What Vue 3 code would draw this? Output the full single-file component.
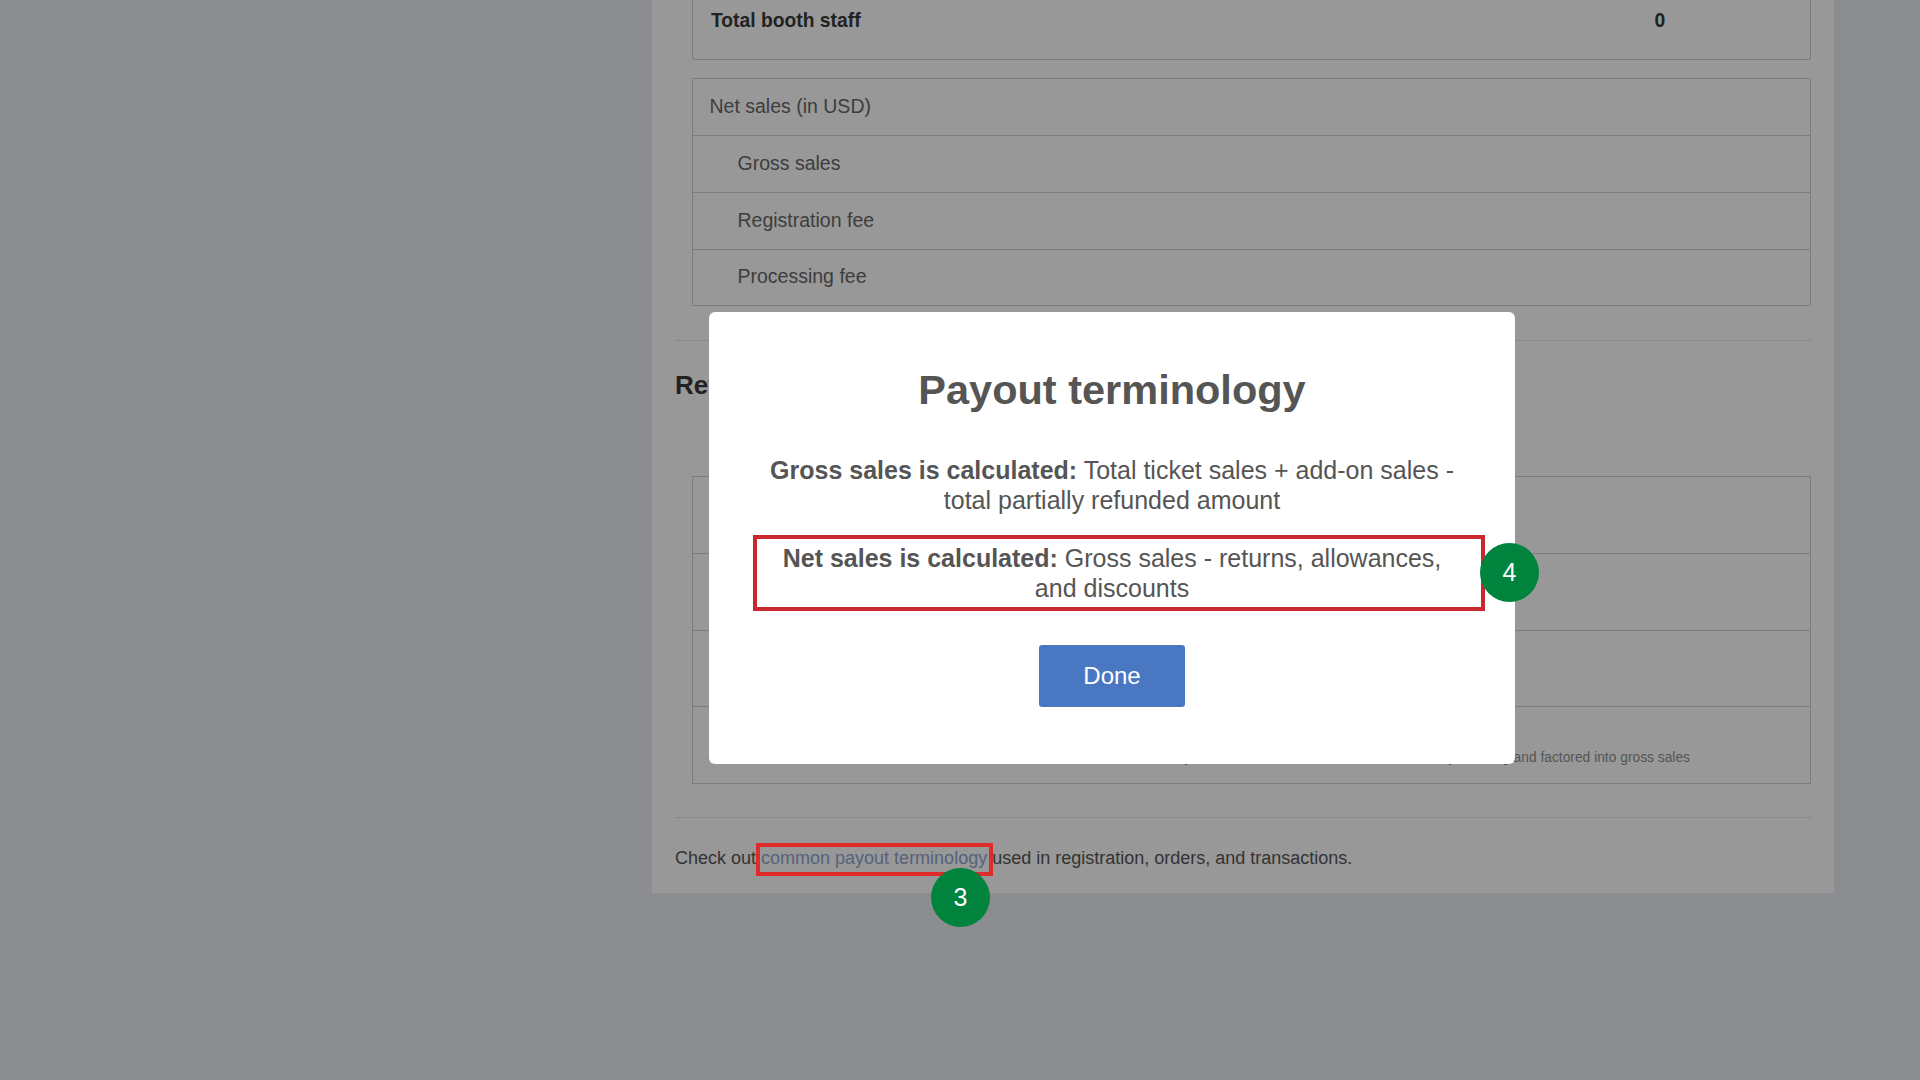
<script setup>
const topRows = [
  { label: 'Net sales (in USD)', sub: false },
  { label: 'Gross sales', sub: true },
  { label: 'Registration fee', sub: true },
  { label: 'Processing fee', sub: true }
]
</script>

<template>
  <div class="page">
    <main class="panel">
      <section class="staff">
        <span>Total booth staff</span>
        <span class="staff-value">0</span>
      </section>
      <section class="table net">
        <div v-for="row in topRows" :key="row.label" class="row" :class="{ sub: row.sub }">{{ row.label }}</div>
      </section>
      <hr class="rule first" />
      <h2 class="heading">Refunds</h2>
      <section class="table refunds">
        <div class="rrow"></div>
        <div class="rrow"></div>
        <div class="rrow"></div>
        <div class="rrow note-row">
          <small class="note">Only refunds that are deducted from the total by ticketing and factored into gross sales</small>
        </div>
      </section>
      <hr class="rule second" />
      <p class="footer">
        Check out
        <span class="link-wrap">
          <a class="link">common payout terminology</a>
          <span class="marker marker-3">3</span>
        </span>
        used in registration, orders, and transactions.
      </p>
    </main>

    <div class="modal">
      <h1 class="title">Payout terminology</h1>
      <p class="para">
        <strong>Gross sales is calculated:</strong> Total ticket sales + add-on sales - total partially refunded amount
      </p>
      <p class="para boxed">
        <strong>Net sales is calculated:</strong> Gross sales - returns, allowances, and discounts
        <span class="marker marker-4">4</span>
      </p>
      <button class="done" type="button">Done</button>
    </div>
  </div>
</template>

<style scoped>
.page {
  position: relative;
  width: 1920px;
  height: 1080px;
  overflow: hidden;
  background: #8c8d91;
  font-family: "Liberation Sans", Arial, sans-serif;
  color: #3d3d3d;
}
.panel {
  box-sizing: border-box;
  width: 1182px;
  height: 893px;
  margin-left: 652px;
  padding: 0 23px 0 23px;
  background: #989898;
  display: flex;
  flex-direction: column;
  align-items: stretch;
}
.staff {
  box-sizing: border-box;
  height: 60px;
  margin-left: 17px;
  padding: 10px 18px 0;
  border: 1px solid #7d7d7d;
  border-top: 0;
  border-radius: 0 0 3px 3px;
  display: flex;
  font-size: 19.3px;
  line-height: 22px;
  font-weight: 700;
  color: #222;
}
.staff-value { margin-left: 794px; }
.table {
  margin-left: 17px;
  border: 1px solid #7d7d7d;
  display: flex;
  flex-direction: column;
}
.net { margin-top: 18px; }
.row {
  box-sizing: border-box;
  height: 56.75px;
  display: flex;
  align-items: center;
  padding-left: 16.5px;
  padding-bottom: 1px;
  font-size: 19.5px;
  border-top: 1px solid #7d7d7d;
}
.row:first-child {
  height: 56px;
  border-top: 0;
}
.row.sub { padding-left: 44.5px; }
.rule {
  margin: 0;
  border: 0;
  border-top: 1px solid #8a8a8a;
}
.rule.first { margin-top: 34px; }
.heading {
  align-self: flex-start;
  margin: 28px 0 0;
  font-size: 26px;
  line-height: 32px;
  font-weight: 700;
  color: #222;
}
.refunds { margin-top: 75px; }
.rrow {
  box-sizing: border-box;
  height: 76.5px;
  border-top: 1px solid #7d7d7d;
}
.rrow:first-child {
  height: 76px;
  border-top: 0;
}
.note-row {
  display: flex;
  justify-content: flex-end;
  align-items: flex-end;
  padding: 0 120px 16px 0;
}
.note {
  font-size: 13.8px;
  line-height: 18px;
  color: #555;
  white-space: nowrap;
}
.rule.second { margin-top: 33px; }
.footer {
  margin: 28px 0 0;
  font-size: 18px;
  line-height: 24px;
  color: #333;
  white-space: nowrap;
}
.link-wrap {
  position: relative;
  display: inline-block;
}
.link { color: #56617a; }
.link-wrap::before {
  content: "";
  position: absolute;
  left: -5px;
  right: -6px;
  top: -3px;
  bottom: -6px;
  border: 4px solid #e12a2a;
}
.marker {
  position: absolute;
  width: 59px;
  height: 59px;
  border-radius: 50%;
  background: #00843d;
  color: #fff;
  font-size: 25px;
  font-weight: 400;
  line-height: 1;
  display: flex;
  align-items: center;
  justify-content: center;
}
.marker-3 { left: 170px; top: 22px; }
.marker-4 { left: 727px; top: 0; }
.modal {
  position: absolute;
  left: 709px;
  top: 312px;
  box-sizing: border-box;
  width: 806px;
  height: 452px;
  padding: 51px 44px 0;
  background: #fff;
  border-radius: 6px;
  display: flex;
  flex-direction: column;
  align-items: center;
  text-align: center;
  color: #555;
}
.title {
  margin: 0;
  font-size: 41.5px;
  line-height: 54px;
  font-weight: 700;
}
.para {
  margin: 38px 0 0;
  width: 100%;
  font-size: 25px;
  line-height: 30px;
}
.boxed {
  position: relative;
  box-sizing: border-box;
  margin-top: 28px;
  padding: 0 24px;
}
.boxed::before {
  content: "";
  position: absolute;
  left: 0;
  right: -14px;
  top: -8px;
  bottom: -8px;
  border: 4px solid #c8282f;
}
.done {
  margin-top: 42px;
  width: 146px;
  height: 62px;
  border: 0;
  border-radius: 3px;
  background: #4a77c2;
  color: #fff;
  font: 400 24px "Liberation Sans", Arial, sans-serif;
}
</style>
